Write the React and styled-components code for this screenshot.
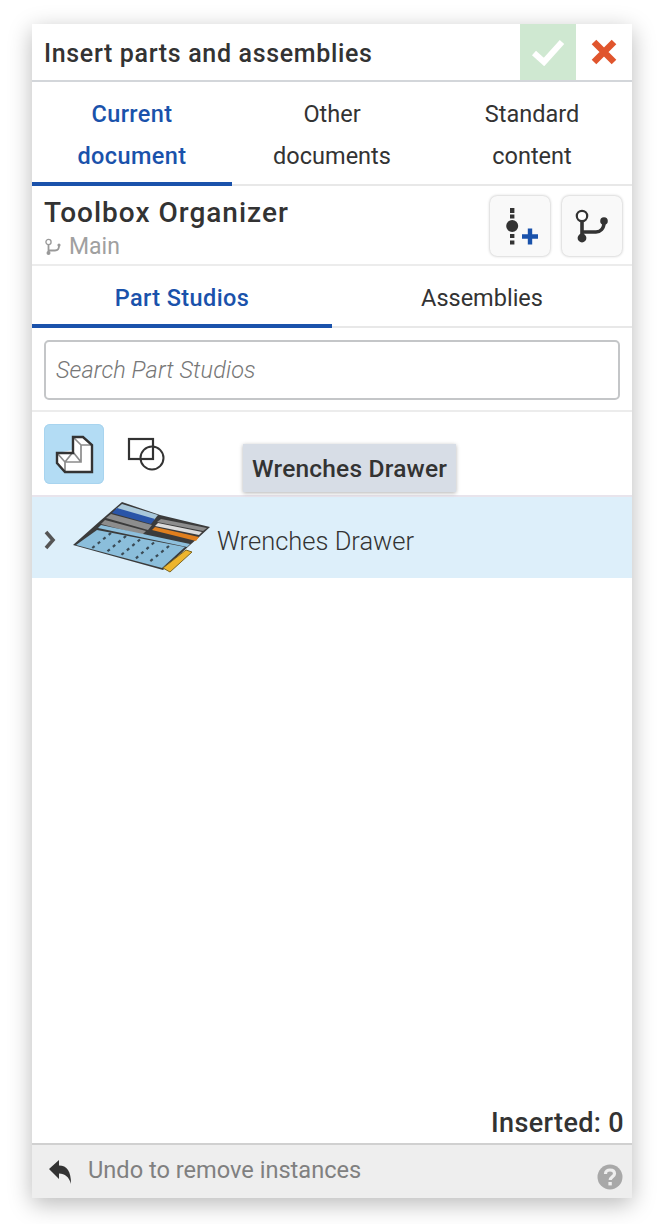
import React from "react";
import styled, { createGlobalStyle } from "styled-components";

const Global = createGlobalStyle`
  html, body { margin: 0; padding: 0; background: #fff; }
  body { font-family: "Roboto", "Liberation Sans", sans-serif; color: #333; }
`;
const Page = styled.div`
  width: 662px; height: 1224px; padding: 24px 30px 26px 32px; box-sizing: border-box; display: flex;
`;
const Panel = styled.div`
  width: 600px; display: flex; flex-direction: column; background: #fff;
  box-shadow: 0 6px 22px rgba(0,0,0,.28);
`;
const Header = styled.div`
  height: 58px; box-sizing: border-box; border-bottom: 2px solid #d3d6da; display: flex; align-items: stretch;
`;
const Title = styled.div`
  flex: 1; padding: 2px 0 0 12px; display: flex; align-items: center;
  font-size: 25px; font-weight: 500; letter-spacing: .66px; color: #333;
`;
const Accept = styled.div`
  width: 56px; background: #cfe8d1; display: flex; align-items: center; justify-content: center;
`;
const Cancel = styled.div`
  width: 56px; display: flex; align-items: center; justify-content: center;
`;
const Tabs = styled.div`
  display: flex; border-bottom: 2px solid #e8e8e8; height: ${p => p.$h}px; box-sizing: border-box;
`;
const Tab = styled.div`
  flex: 1; margin-bottom: -2px; box-sizing: border-box; text-align: center;
  font-size: ${p => p.$size}px; line-height: 42px; padding-top: ${p => p.$pt}px;
  font-weight: ${p => (p.$active ? 500 : 400)};
  letter-spacing: ${p => (p.$active ? ".4px" : "0")};
  color: ${p => (p.$active ? "#1a52ab" : "#333")};
  border-bottom: 4px solid ${p => (p.$active ? "#1a52ab" : "transparent")};
`;
const DocRow = styled.div`
  height: 80px; box-sizing: border-box; border-bottom: 2px solid #ececec;
  display: flex; justify-content: space-between; padding: 9px 10px 0 12px;
`;
const DocName = styled.div`
  font-size: 28px; font-weight: 500; line-height: 36px; letter-spacing: 1px; color: #333;
`;
const Branch = styled.div`
  display: flex; align-items: center; gap: 7px; font-size: 23px; line-height: 32px; color: #a0a0a0;
`;
const DocInfo = styled.div`display: flex; flex-direction: column;`;
const Actions = styled.div`display: flex; gap: 12px; padding-top: 1px;`;
const ActionBtn = styled.div`
  width: 60px; height: 60px; border-radius: 7px; background: #f9f9f9;
  box-shadow: 0 0 3px rgba(0,0,0,.3); display: flex; align-items: center; justify-content: center;
`;
const SearchWrap = styled.div`
  height: 84px; box-sizing: border-box; padding: 12px 12px 0; border-bottom: 2px solid #ececec;
`;
const Search = styled.div`
  height: 60px; box-sizing: border-box; border: 2px solid #c4c6c8; border-radius: 5px;
  display: flex; align-items: center; padding-left: 10px; font-size: 23.5px; letter-spacing: .1px;
  font-style: italic; font-weight: 300; color: #777;
`;
const Filters = styled.div`
  position: relative; height: 85px; box-sizing: border-box; padding: 12px 12px 0;
  display: flex; gap: 12px; border-bottom: 2px solid #e8e4ec;
`;
const FilterBtn = styled.div`
  width: 60px; height: 60px; border-radius: 6px;
  background: ${p => (p.$active ? "#b3dcf4" : "transparent")};
  box-shadow: ${p => (p.$active ? "inset 0 0 0 1px #a8d4ef" : "none")};
`;
const Tooltip = styled.div`
  position: absolute; left: 211px; top: 32px; height: 48px; padding: 0 9px; display: flex; align-items: center;
  background: #d7dde6; box-shadow: 0 1px 4px rgba(0,0,0,.3); font-size: 24.5px; font-weight: 500; letter-spacing: .2px; color: #333;
`;
const Row = styled.div`
  height: 81px; background: #ddeffa; display: flex; align-items: center; padding-left: 12px;
`;
const Chevron = styled.svg`margin-top: 5px; flex: none;`;
const RowName = styled.div`
  font-size: 25.5px; font-weight: 300; color: #333; margin-left: 2px; padding-top: 7px;
`;
const Thumb = styled.svg`margin-left: 12px; flex: none; filter: blur(.7px);`;
const Spacer = styled.div`flex: 1;`;
const Inserted = styled.div`
  text-align: right; padding: 0 8px 3px 0; font-size: 27px; line-height: 34px; font-weight: 500; letter-spacing: .35px; color: #333;
`;
const Footer = styled.div`
  height: 55px; box-sizing: border-box; border-top: 2px solid #d0d0d0; background: #eee;
  display: flex; align-items: center; padding: 0 9px 0 16px;
`;
const Hint = styled.div`
  flex: 1; margin-left: 16px; margin-bottom: 3px; font-size: 23.6px; color: #808080;
`;
const HelpIcon = styled.svg`margin-top: 10px; flex: none;`;

const Thumbnail = () => (
  <Thumb width="145" height="85" viewBox="0 0 145 85">
    <polygon points="52,7 90,20 140,32 128,43 120,50 93,75 3,50 30,26" fill="#3b3b3b" />
    <polygon points="52,9 88,20 84,25 46,14" fill="#a9c8da" />
    <polygon points="47,13 85,24 81,29 42,18" fill="#2a55a8" />
    <polygon points="41,19 82,30 78,35 36,23" fill="#8d8d8d" />
    <polygon points="35,25 76,36 72,40 31,29" fill="#8d8d8d" />
    <polygon points="91,24 137,33 133,36 87,27" fill="#8d8d8d" />
    <polygon points="88,28 132,37 129,40 85,31" fill="#dcdcdc" />
    <polygon points="85,32 129,42 126,46 82,35" fill="#e07f1e" />
    <polygon points="31,30 120,49 117,52 28,33" fill="#8dbfdc" />
    <polygon points="27,35 115,52 92,73 6,50" fill="#8bbedb" />
    <g stroke="#3a4a55" strokeWidth="2.2" strokeDasharray="3 4">
      <line x1="41" y1="38" x2="21" y2="54" />
      <line x1="56" y1="41" x2="36" y2="57.5" />
      <line x1="70" y1="44.5" x2="50" y2="61" />
      <line x1="84" y1="47.5" x2="64" y2="65" />
      <line x1="99" y1="51" x2="78" y2="68" />
    </g>
    <polygon points="93,73 116,55 122,57 100,77" fill="#edb52e" stroke="#7a6420" strokeWidth="1" />
  </Thumb>
);

export default function App() {
  return (
    <Page>
      <Global />
      <Panel>
        <Header>
          <Title>Insert parts and assemblies</Title>
          <Accept>
            <svg width="34" height="28" viewBox="0 0 34 28"><path d="M3 15L13 24L31 4" fill="none" stroke="#fff" strokeWidth="6" /></svg>
          </Accept>
          <Cancel>
            <svg width="26" height="26" viewBox="0 0 26 26"><path d="M3 3L23 23M23 3L3 23" fill="none" stroke="#e0552d" strokeWidth="6.5" /></svg>
          </Cancel>
        </Header>
        <Tabs $h={104}>
          <Tab $active $size={23.5} $pt={11}>Current<br />document</Tab>
          <Tab $size={23.5} $pt={11}>Other<br />documents</Tab>
          <Tab $size={23.5} $pt={11}>Standard<br />content</Tab>
        </Tabs>
        <DocRow>
          <DocInfo>
            <DocName>Toolbox Organizer</DocName>
            <Branch>
              <svg width="18" height="18" viewBox="0 0 18 18" fill="none">
                <circle cx="4.5" cy="4" r="2.6" stroke="#999" strokeWidth="1.3" />
                <path d="M4.5 6.5V15M4.5 12.5H11C13.5 12.5 15 10.5 15 8" stroke="#999" strokeWidth="1.8" />
                <circle cx="15" cy="7" r="1.6" fill="#999" /><circle cx="4.5" cy="15" r="2" fill="#999" />
              </svg>
              Main
            </Branch>
          </DocInfo>
          <Actions>
            <ActionBtn>
              <svg width="60" height="60" viewBox="0 0 60 60">
                <path d="M20 12h4.4v5H20zM20 18.5h4.4v4H20zM20 38h4.4v4H20zM20 44.5h4.4v4H20z" fill="#333" />
                <circle cx="22.2" cy="30" r="6" fill="#333" />
                <path d="M32 40.5H48M40 32.5V48.5" stroke="#1a52ab" strokeWidth="4.4" />
              </svg>
            </ActionBtn>
            <ActionBtn>
              <svg width="60" height="60" viewBox="0 0 60 60" fill="none">
                <circle cx="20" cy="20" r="5.2" stroke="#333" strokeWidth="2.2" fill="#fff" />
                <path d="M20 25V41" stroke="#333" strokeWidth="3.6" />
                <circle cx="20" cy="42" r="4.4" fill="#333" />
                <circle cx="42" cy="25" r="3.8" fill="#333" />
                <path d="M42 26C42 33 38 36 34 36H20" stroke="#333" strokeWidth="3.6" />
              </svg>
            </ActionBtn>
          </Actions>
        </DocRow>
        <Tabs $h={62}>
          <Tab $active $size={23.5} $pt={11}>Part Studios</Tab>
          <Tab $size={23.5} $pt={11}>Assemblies</Tab>
        </Tabs>
        <SearchWrap><Search>Search Part Studios</Search></SearchWrap>
        <Filters>
          <FilterBtn $active>
            <svg width="60" height="60" viewBox="0 0 60 60" fill="none">
              <path d="M13 29L29 26V13H39L48 21V48H21L13 39Z" fill="#fff" />
              <path d="M13 29L21 38H37V21L29 13M37 21H48M21 38V48M21 38L29 28M37 38L29 28" stroke="#8c8c8c" strokeWidth="1.7" />
              <path d="M13 29H29V13H39L48 21V48H21L13 39Z" stroke="#333" strokeWidth="2.4" />
            </svg>
          </FilterBtn>
          <FilterBtn>
            <svg width="60" height="60" viewBox="0 0 60 60" fill="none" stroke="#333">
              <rect x="13" y="15" width="24" height="20" strokeWidth="2.2" />
              <circle cx="36" cy="34" r="11.5" strokeWidth="2" />
            </svg>
          </FilterBtn>
          <Tooltip>Wrenches Drawer</Tooltip>
        </Filters>
        <Row>
          <Chevron width="14" height="22" viewBox="0 0 14 22"><path d="M2 3L9 11L2 19" fill="none" stroke="#555" strokeWidth="3.6" /></Chevron>
          <Thumbnail />
          <RowName>Wrenches Drawer</RowName>
        </Row>
        <Spacer />
        <Inserted>Inserted: 0</Inserted>
        <Footer>
          <svg width="24" height="26" viewBox="0 0 24 26"><path d="M1 10L11 1V6.5C19 6.5 23 12 23 25C21 18 17 14.5 11 14.5V20Z" fill="#333" /></svg>
          <Hint>Undo to remove instances</Hint>
          <HelpIcon width="26" height="26" viewBox="0 0 26 26">
            <circle cx="13" cy="13" r="12.5" fill="#a8a8a8" />
            <path d="M8.5 10C8.5 7.5 10.5 6 13 6C15.7 6 17.5 7.5 17.5 9.7C17.5 12.5 13.2 13 13.2 16" fill="none" stroke="#eee" strokeWidth="3.2" />
            <rect x="11.4" y="18" width="3.4" height="3.4" fill="#eee" />
          </HelpIcon>
        </Footer>
      </Panel>
    </Page>
  );
}
